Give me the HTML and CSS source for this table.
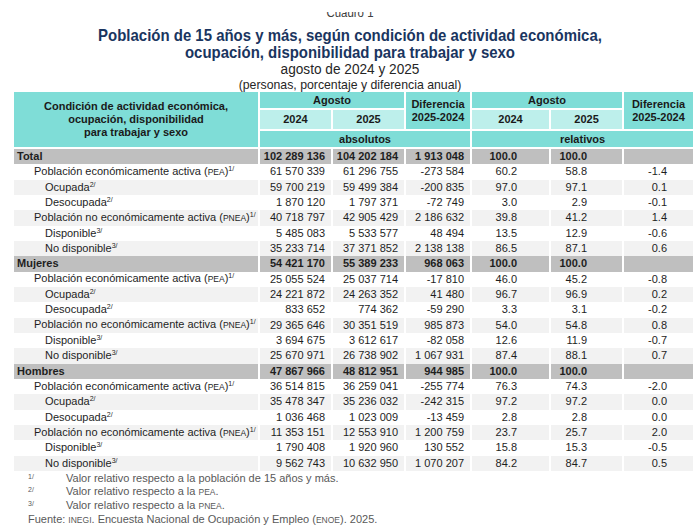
FILE: index.html
```html
<!DOCTYPE html>
<html lang="es">
<head>
<meta charset="utf-8">
<title>Cuadro 1</title>
<link rel="stylesheet" href="styles.css">
</head>
<body>
<div class="page">
  <div class="caption-clip"><div class="caption">Cuadro 1</div></div>
  <h1 class="title">Población de 15 años y más, según condición de actividad económica,<br>ocupación, disponibilidad para trabajar y sexo</h1>
  <div class="subtitle">agosto de 2024 y 2025</div>
  <div class="units">(personas, porcentaje y diferencia anual)</div>

  <table class="data">
    <colgroup>
      <col class="c-lab"><col class="c-a"><col class="c-a"><col class="c-d"><col class="c-r1"><col class="c-a"><col class="c-r3">
    </colgroup>
    <thead>
      <tr class="h1">
        <th rowspan="3" class="hl">Condición de actividad económica,<br>ocupación, disponibilidad<br>para trabajar y sexo</th>
        <th colspan="2">Agosto</th>
        <th rowspan="2">Diferencia<br>2025-2024</th>
        <th colspan="2">Agosto</th>
        <th rowspan="2">Diferencia<br>2025-2024</th>
      </tr>
      <tr class="h2">
        <th class="yr">2024</th><th class="yr">2025</th>
        <th class="yr">2024</th><th class="yr">2025</th>
      </tr>
      <tr class="h3">
        <th colspan="3">absolutos</th>
        <th colspan="3">relativos</th>
      </tr>
    </thead>
    <tbody>
      <tr class="tot"><td class="l0">Total</td><td>102 289 136</td><td>104 202 184</td><td>1 913 048</td><td>100.0</td><td>100.0</td><td></td></tr>
      <tr><td class="l1">Población económicamente activa (<span class="sc">PEA</span>)<sup>1/</sup></td><td>61 570 339</td><td>61 296 755</td><td>-273 584</td><td>60.2</td><td>58.8</td><td>-1.4</td></tr>
      <tr class="alt"><td class="l2">Ocupada<sup>2/</sup></td><td>59 700 219</td><td>59 499 384</td><td>-200 835</td><td>97.0</td><td>97.1</td><td>0.1</td></tr>
      <tr><td class="l2">Desocupada<sup>2/</sup></td><td>1 870 120</td><td>1 797 371</td><td>-72 749</td><td>3.0</td><td>2.9</td><td>-0.1</td></tr>
      <tr class="alt"><td class="l1">Población no económicamente activa (<span class="sc">PNEA</span>)<sup>1/</sup></td><td>40 718 797</td><td>42 905 429</td><td>2 186 632</td><td>39.8</td><td>41.2</td><td>1.4</td></tr>
      <tr><td class="l2">Disponible<sup>3/</sup></td><td>5 485 083</td><td>5 533 577</td><td>48 494</td><td>13.5</td><td>12.9</td><td>-0.6</td></tr>
      <tr class="alt"><td class="l2">No disponible<sup>3/</sup></td><td>35 233 714</td><td>37 371 852</td><td>2 138 138</td><td>86.5</td><td>87.1</td><td>0.6</td></tr>

      <tr class="tot"><td class="l0">Mujeres</td><td>54 421 170</td><td>55 389 233</td><td>968 063</td><td>100.0</td><td>100.0</td><td></td></tr>
      <tr><td class="l1">Población económicamente activa (<span class="sc">PEA</span>)<sup>1/</sup></td><td>25 055 524</td><td>25 037 714</td><td>-17 810</td><td>46.0</td><td>45.2</td><td>-0.8</td></tr>
      <tr class="alt"><td class="l2">Ocupada<sup>2/</sup></td><td>24 221 872</td><td>24 263 352</td><td>41 480</td><td>96.7</td><td>96.9</td><td>0.2</td></tr>
      <tr><td class="l2">Desocupada<sup>2/</sup></td><td>833 652</td><td>774 362</td><td>-59 290</td><td>3.3</td><td>3.1</td><td>-0.2</td></tr>
      <tr class="alt"><td class="l1">Población no económicamente activa (<span class="sc">PNEA</span>)<sup>1/</sup></td><td>29 365 646</td><td>30 351 519</td><td>985 873</td><td>54.0</td><td>54.8</td><td>0.8</td></tr>
      <tr><td class="l2">Disponible<sup>3/</sup></td><td>3 694 675</td><td>3 612 617</td><td>-82 058</td><td>12.6</td><td>11.9</td><td>-0.7</td></tr>
      <tr class="alt"><td class="l2">No disponible<sup>3/</sup></td><td>25 670 971</td><td>26 738 902</td><td>1 067 931</td><td>87.4</td><td>88.1</td><td>0.7</td></tr>

      <tr class="tot"><td class="l0">Hombres</td><td>47 867 966</td><td>48 812 951</td><td>944 985</td><td>100.0</td><td>100.0</td><td></td></tr>
      <tr><td class="l1">Población económicamente activa (<span class="sc">PEA</span>)<sup>1/</sup></td><td>36 514 815</td><td>36 259 041</td><td>-255 774</td><td>76.3</td><td>74.3</td><td>-2.0</td></tr>
      <tr class="alt"><td class="l2">Ocupada<sup>2/</sup></td><td>35 478 347</td><td>35 236 032</td><td>-242 315</td><td>97.2</td><td>97.2</td><td>0.0</td></tr>
      <tr><td class="l2">Desocupada<sup>2/</sup></td><td>1 036 468</td><td>1 023 009</td><td>-13 459</td><td>2.8</td><td>2.8</td><td>0.0</td></tr>
      <tr class="alt"><td class="l1">Población no económicamente activa (<span class="sc">PNEA</span>)<sup>1/</sup></td><td>11 353 151</td><td>12 553 910</td><td>1 200 759</td><td>23.7</td><td>25.7</td><td>2.0</td></tr>
      <tr><td class="l2">Disponible<sup>3/</sup></td><td>1 790 408</td><td>1 920 960</td><td>130 552</td><td>15.8</td><td>15.3</td><td>-0.5</td></tr>
      <tr class="alt"><td class="l2">No disponible<sup>3/</sup></td><td>9 562 743</td><td>10 632 950</td><td>1 070 207</td><td>84.2</td><td>84.7</td><td>0.5</td></tr>
    </tbody>
  </table>

  <div class="notes">
    <div class="fn"><span class="mk">1/</span><span>Valor relativo respecto a la población de 15 años y más.</span></div>
    <div class="fn"><span class="mk">2/</span><span>Valor relativo respecto a la <span class="sc">PEA</span>.</span></div>
    <div class="fn"><span class="mk">3/</span><span>Valor relativo respecto a la <span class="sc">PNEA</span>.</span></div>
    <div class="src">Fuente: <span class="sc">INEGI</span>. Encuesta Nacional de Ocupación y Empleo (<span class="sc">ENOE</span>). 2025.</div>
  </div>
</div>
</body>
</html>
```

FILE: styles.css
```css
html, body {
  margin: 0;
  padding: 0;
  background: #ffffff;
}

body {
  font-family: "Liberation Sans", Arial, sans-serif;
  color: #1e1e1e;
}

.page {
  width: 700px;
}

.caption-clip {
  margin-top: 12px;
  height: 8px;
  overflow: hidden;
}

.caption {
  margin-top: -7px;
  text-align: center;
  font-size: 13px;
  line-height: 15px;
  color: #404040;
  transform: scaleX(0.88);
}

.title {
  margin: 7px 0 0;
  text-align: center;
  font-size: 17px;
  line-height: 17px;
  font-weight: bold;
  color: #1a3560;
  transform: scaleX(0.88);
}

.subtitle {
  text-align: center;
  font-size: 15.5px;
  line-height: 16px;
  color: #262626;
  transform: scaleX(0.88);
}

.units {
  text-align: center;
  font-size: 13.5px;
  line-height: 15px;
  color: #262626;
  transform: scaleX(0.91);
}

.data {
  margin-left: 14px;
  width: 680px;
  table-layout: fixed;
  border-collapse: collapse;
  font-size: 11px;
}

.c-lab { width: 245px; }
.c-a { width: 73px; }
.c-d { width: 66px; }
.c-r1 { width: 79px; }
.c-r3 { width: 71px; }

.data th {
  background: #7fddd7;
  border: 2px solid #ffffff;
  font-weight: bold;
  line-height: 13px;
  padding: 0;
  text-align: center;
  color: #1a1a1a;
}

.data thead tr:first-child th {
  border-top: 0;
}

.data th:first-child {
  border-left: 0;
}

.data th.yr {
  background: #bdefeb;
}

.h1 { height: 17px; }
.h2 { height: 21px; }
.h3 { height: 18px; }

.data td {
  height: 15.33px;
  padding: 0;
  line-height: 13px;
  text-align: right;
  white-space: nowrap;
  border-left: 2px solid #ffffff;
  border-right: 2px solid #ffffff;
  color: #1e1e1e;
}

.data td:first-child {
  border-left: 0;
  text-align: left;
}

.data td:nth-child(2),
.data td:nth-child(3),
.data td:nth-child(4) {
  padding-right: 6px;
}

.data td:nth-child(5) { padding-right: 32px; }
.data td:nth-child(6) { padding-right: 35px; }
.data td:nth-child(7) { padding-right: 26px; }

.data td.l0 { padding-left: 3px; }
.data td.l1 { padding-left: 20px; }
.data td.l2 { padding-left: 31px; }

.data tr.alt td {
  background: #f2f2f2;
}

.data tr.tot td {
  background: #bfbfbf;
  font-weight: bold;
}

.sc {
  font-size: 8.5px;
}

sup {
  font-size: 7px;
  line-height: 0;
  vertical-align: 4px;
}

.notes {
  padding-top: 1px;
  font-size: 11px;
  line-height: 13px;
  color: #595959;
}

.fn {
  display: flex;
  padding-left: 28px;
}

.mk {
  width: 38px;
  flex: none;
  font-size: 7px;
  line-height: 9px;
}

.src {
  padding-left: 28px;
}
```
